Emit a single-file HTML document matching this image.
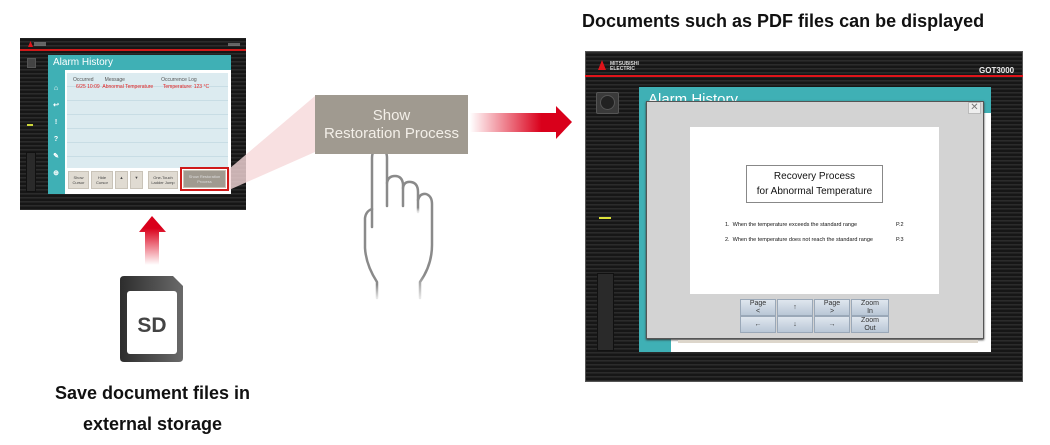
<!DOCTYPE html>
<html><head><meta charset="utf-8"><style>
*{margin:0;padding:0;box-sizing:border-box}
body{width:1050px;height:445px;background:#fff;position:relative;overflow:hidden;font-family:"Liberation Sans",sans-serif}
.a{position:absolute}
.dev{background:#1b1b1b;background-image:repeating-linear-gradient(0deg,#2b2b2b 0 1px,#161616 1px 3px,#222 3px 4px)}
.t{font-weight:bold;color:#111}
.btn{position:absolute;background:#e0dbd2;border:1px solid #c9c3b8;font-size:4px;color:#444;text-align:center;line-height:5px;padding-top:3px}
.pb{position:absolute;background:linear-gradient(#dfe6ee,#b9c7d6);border:1px solid #9aa8b8;font-size:7px;color:#333;text-align:center;line-height:8px}
</style></head><body>

<div class="a t" style="left:582px;top:11px;font-size:18px;white-space:nowrap">Documents such as PDF files can be displayed</div>
<div class="a t" style="left:20px;top:378px;width:265px;text-align:center;font-size:18px;line-height:31px">Save document files in<br>external storage</div>

<!-- left device -->
<div class="a dev" style="left:20px;top:38px;width:226px;height:172px"></div>
<div class="a" style="left:20px;top:49px;width:226px;height:2px;background:#d01a1a"></div>
<div class="a" style="left:28px;top:41px;width:5px;height:6px;background:#e0141a;clip-path:polygon(50% 0,100% 100%,0 100%)"></div>
<div class="a" style="left:34px;top:42px;width:12px;height:4px;background:#999;opacity:.6"></div>
<div class="a" style="left:228px;top:43px;width:12px;height:3px;background:#999;opacity:.6"></div>
<div class="a" style="left:27px;top:58px;width:9px;height:10px;background:#444;border:1px solid #555"></div>
<div class="a" style="left:27px;top:124px;width:6px;height:2px;background:#cdd63a"></div>
<div class="a" style="left:26px;top:152px;width:10px;height:40px;background:#2a2a2a;border:1px solid #111"></div>
<div class="a" style="left:48px;top:55px;width:183px;height:139px;background:#3fb0b5"></div>
<div class="a" style="left:53px;top:57px;font-size:10px;color:#fff">Alarm History</div>
<div class="a" style="left:65px;top:70px;width:166px;height:124px;background:#fff"></div>
<div class="a" style="left:67px;top:73px;width:161px;height:95px;background:#dcebf0;background-image:repeating-linear-gradient(180deg,transparent 0 13px,#c8dde5 13px 14px)"></div>
<div class="a" style="left:73px;top:77px;font-size:5px;color:#555;white-space:nowrap">Occurred&nbsp;&nbsp;&nbsp;&nbsp;&nbsp;&nbsp;&nbsp;&nbsp;Message&nbsp;&nbsp;&nbsp;&nbsp;&nbsp;&nbsp;&nbsp;&nbsp;&nbsp;&nbsp;&nbsp;&nbsp;&nbsp;&nbsp;&nbsp;&nbsp;&nbsp;&nbsp;&nbsp;&nbsp;&nbsp;&nbsp;&nbsp;&nbsp;&nbsp;&nbsp;Occurrence Log</div>
<div class="a" style="left:76px;top:84px;font-size:5px;color:#e02020;white-space:nowrap">6/25 10:09&nbsp;&nbsp;Abnormal Temperature&nbsp;&nbsp;&nbsp;&nbsp;&nbsp;&nbsp;&nbsp;Temperature: 123 °C</div>
<div class="a" style="left:52px;top:80px;width:8px;font-size:7px;color:#fff;line-height:17px;font-weight:bold;text-align:center">⌂<br>↩<br>!<br>?<br>✎<br>⊕</div>
<div class="btn" style="left:68px;top:171px;width:21px;height:18px">Show Cursor</div>
<div class="btn" style="left:91px;top:171px;width:22px;height:18px">Hide Cursor</div>
<div class="btn" style="left:115px;top:171px;width:13px;height:18px">▲</div>
<div class="btn" style="left:130px;top:171px;width:13px;height:18px">▼</div>
<div class="btn" style="left:148px;top:171px;width:30px;height:18px">One-Touch Ladder Jump</div>
<div class="a" style="left:180px;top:167px;width:49px;height:24px;border:2px solid #d01a1a"></div>
<div class="btn" style="left:183px;top:170px;width:43px;height:18px;background:#a09a90;color:#ddd">Show Restoration Process</div>

<svg class="a" style="left:0;top:0" width="1050" height="445">
<defs>
<linearGradient id="ar" x1="0" x2="1"><stop offset="0" stop-color="#e0001a" stop-opacity="0"/><stop offset=".7" stop-color="#d9001b"/></linearGradient>
<linearGradient id="au" x1="0" y1="1" x2="0" y2="0"><stop offset="0" stop-color="#e0001a" stop-opacity="0"/><stop offset=".75" stop-color="#d9001b"/></linearGradient>
<linearGradient id="sd" x1="0" x2="1"><stop offset="0" stop-color="#2d2d2d"/><stop offset="1" stop-color="#6a6a6a"/></linearGradient>
<linearGradient id="hf" x1="0" y1="0" x2="0" y2="1"><stop offset=".85" stop-color="#8a8a8a"/><stop offset="1" stop-color="#8a8a8a" stop-opacity="0.2"/></linearGradient>
</defs>
<polygon points="229,169 315,96 315,152 229,190" fill="#f6d8da" opacity=".8"/>
<polygon points="470,113 556,113 556,106 572,122 556,139 556,132 470,132" fill="url(#ar)"/>
<polygon points="145,265 145,232 139,232 152,216 166,232 159,232 159,265" fill="url(#au)"/>
<path d="M124,276 L173,276 L183,286 L183,358 Q183,362 179,362 L124,362 Q120,362 120,358 L120,280 Q120,276 124,276 Z" fill="url(#sd)"/>
<rect x="127" y="291" width="50" height="63" rx="3" fill="#fff"/>
<text x="152" y="332" font-family="Liberation Sans" font-weight="bold" font-size="21" fill="#444" text-anchor="middle">SD</text>
<g fill="none" stroke="url(#hf)" stroke-width="2.5" stroke-linecap="round" stroke-linejoin="round">
<path d="M372,227 L372,158 Q372,149 379.5,149 Q387,149 387,158 L387,183 Q388,176 395,176 Q402,176 403,184 L403,188 Q404,181 411,182 Q418,183 418,192 L418,200 Q420,193 426,194 Q432,196 432,204 L432,245 Q432,265 420,282 L420,298"/>
<path d="M377,298 L377,282 Q366,265 365,248 L365,218 Q366,211 372,209"/>
<path d="M387,183 L387,206 M403,188 L403,206 M418,200 L418,212"/>
</g>
</svg>
<div class="a" style="left:315px;top:95px;width:153px;height:59px;background:#a09a90;color:#f3efe8;font-size:15px;text-align:center;line-height:18px;padding-top:12px">Show<br>Restoration Process</div>

<!-- right device -->
<div class="a dev" style="left:585px;top:51px;width:438px;height:331px;border:1px solid #555"></div>
<div class="a" style="left:585px;top:75px;width:438px;height:2px;background:#e0141a"></div>
<div class="a" style="left:598px;top:60px;width:8px;height:10px;background:#e0141a;clip-path:polygon(50% 0,100% 100%,0 100%)"></div>
<div class="a" style="left:610px;top:62px;font-size:5px;color:#ddd;font-weight:bold;line-height:5px">MITSUBISHI<br>ELECTRIC</div>
<div class="a" style="left:979px;top:66px;font-size:8px;color:#eee;font-weight:bold">GOT3000</div>
<div class="a" style="left:596px;top:92px;width:23px;height:22px;background:#3a3a3a;border:1px solid #555;border-radius:2px"></div>
<div class="a" style="left:600px;top:95px;width:15px;height:15px;background:#222;border-radius:50%;border:1px solid #555"></div>
<div class="a" style="left:599px;top:217px;width:12px;height:2px;background:#dde23a"></div>
<div class="a" style="left:597px;top:273px;width:17px;height:78px;background:#2a2a2a;border:1px solid #111"></div>
<div class="a" style="left:639px;top:87px;width:352px;height:265px;background:#fff"></div>
<div class="a" style="left:639px;top:87px;width:352px;height:26px;background:#3fb0b5"></div>
<div class="a" style="left:639px;top:87px;width:32px;height:265px;background:#3fb0b5"></div>
<div class="a" style="left:648px;top:91px;font-size:15px;color:#fff">Alarm History</div>
<div class="a" style="left:646px;top:101px;width:338px;height:238px;background:#d3d3d3;border:1px solid #555;box-shadow:0 1px 2px #333"></div>
<div class="a" style="left:968px;top:102px;width:13px;height:12px;background:#eee;border:1px solid #bbb;font-size:10px;line-height:10px;text-align:center;color:#777">✕</div>
<div class="a" style="left:690px;top:127px;width:249px;height:167px;background:#fff"></div>
<div class="a" style="left:746px;top:165px;width:137px;height:38px;border:1px solid #888;font-size:10px;text-align:center;line-height:15px;padding-top:3px;color:#111">Recovery Process<br>for Abnormal Temperature</div>
<div class="a" style="left:725px;top:222px;font-size:5.5px;color:#111;white-space:nowrap">1.&nbsp;&nbsp;When the temperature exceeds the standard range</div>
<div class="a" style="left:896px;top:222px;font-size:5.5px;color:#111">P.2</div>
<div class="a" style="left:725px;top:237px;font-size:5.5px;color:#111;white-space:nowrap">2.&nbsp;&nbsp;When the temperature does not reach the standard range</div>
<div class="a" style="left:896px;top:237px;font-size:5.5px;color:#111">P.3</div>
<div class="pb" style="left:740px;top:299px;width:36px;height:17px">Page<br>&lt;</div>
<div class="pb" style="left:777px;top:299px;width:36px;height:17px;line-height:16px">↑</div>
<div class="pb" style="left:814px;top:299px;width:36px;height:17px">Page<br>&gt;</div>
<div class="pb" style="left:851px;top:299px;width:38px;height:17px">Zoom<br>In</div>
<div class="pb" style="left:740px;top:316px;width:36px;height:17px;line-height:16px">←</div>
<div class="pb" style="left:777px;top:316px;width:36px;height:17px;line-height:16px">↓</div>
<div class="pb" style="left:814px;top:316px;width:36px;height:17px;line-height:16px">→</div>
<div class="pb" style="left:851px;top:316px;width:38px;height:17px">Zoom<br>Out</div>
<div class="a" style="left:678px;top:340px;width:300px;height:3px;background:#ddd6cb"></div>
</body></html>
